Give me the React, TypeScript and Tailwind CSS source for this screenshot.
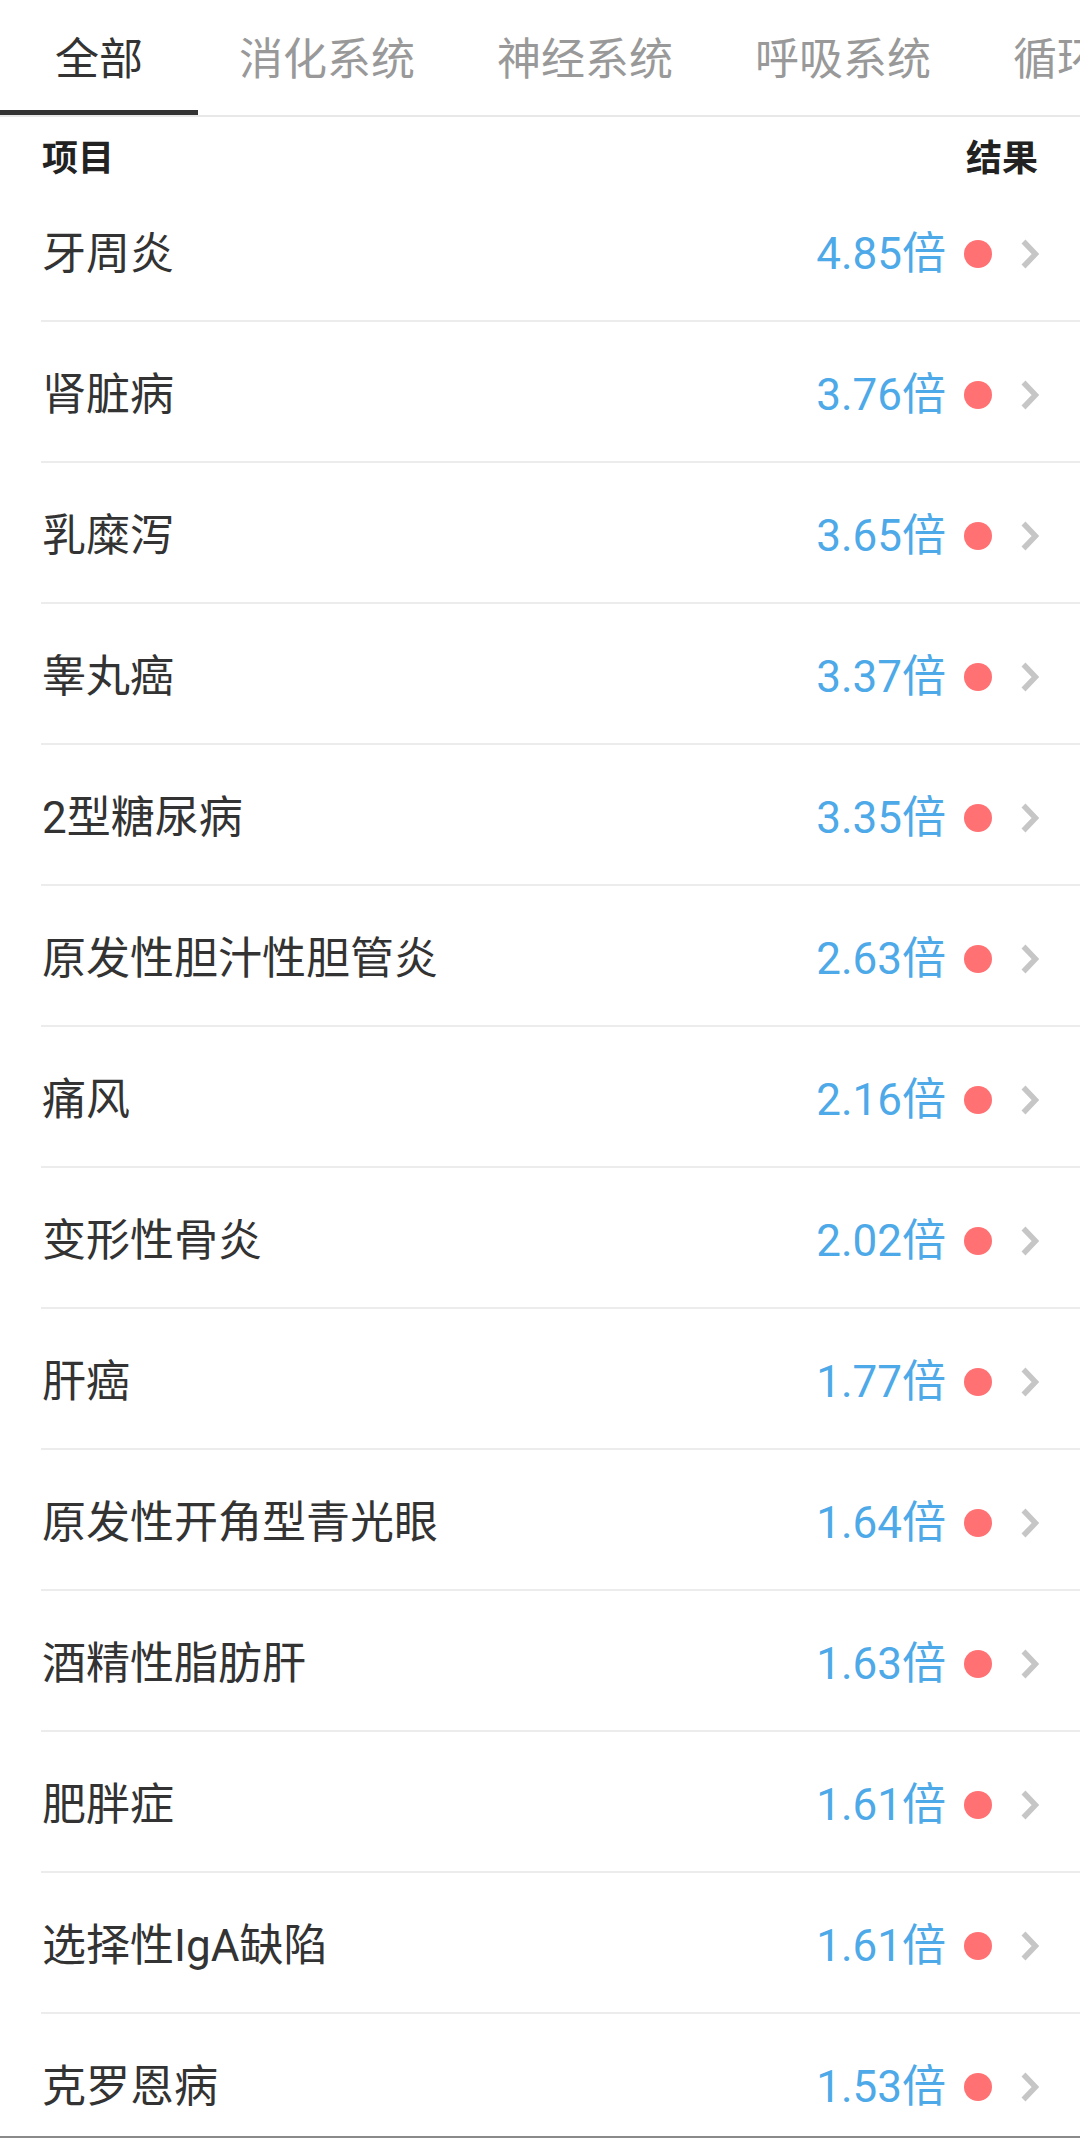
const tabs = ["全部", "消化系统", "神经系统", "呼吸系统", "循环系统"];

const items = [
  { name: "牙周炎", value: "4.85" },
  { name: "肾脏病", value: "3.76" },
  { name: "乳糜泻", value: "3.65" },
  { name: "睾丸癌", value: "3.37" },
  { name: "2型糖尿病", value: "3.35" },
  { name: "原发性胆汁性胆管炎", value: "2.63" },
  { name: "痛风", value: "2.16" },
  { name: "变形性骨炎", value: "2.02" },
  { name: "肝癌", value: "1.77" },
  { name: "原发性开角型青光眼", value: "1.64" },
  { name: "酒精性脂肪肝", value: "1.63" },
  { name: "肥胖症", value: "1.61" },
  { name: "选择性IgA缺陷", value: "1.61" },
  { name: "克罗恩病", value: "1.53" },
];

function Chevron() {
  return (
    <svg width="19" height="32" viewBox="0 0 19 32" fill="none" className="shrink-0">
      <path d="M3.5 3.5 L15.5 16 L3.5 28.5" stroke="#c6c6c6" strokeWidth="5.5" />
    </svg>
  );
}

export default function App() {
  return (
    <div className="h-[2138px] overflow-hidden bg-white border-b-2 border-[#8a8a8a] font-['Roboto','Noto_Sans_CJK_SC',sans-serif]">
      {/* tabs */}
      <div className="flex h-[117px] border-b-2 border-[#e8e8e8] overflow-hidden whitespace-nowrap">
        {tabs.map((tab, i) => (
          <div
            key={tab}
            className={
              i === 0
                ? "relative w-[198px] shrink-0 flex items-center justify-center pt-[5px] text-[44px] leading-[44px] text-[#333]"
                : "relative shrink-0 flex items-center px-[41px] pt-[5px] text-[44px] leading-[44px] text-[#999]"
            }
          >
            {tab}
            {i === 0 && (
              <span className="absolute left-0 right-0 -bottom-[2px] h-[7px] bg-[#333]" />
            )}
          </div>
        ))}
      </div>

      {/* header */}
      <div className="h-[64px] flex justify-between px-[42px] pt-[24px] text-[36px] leading-[36px] font-bold text-[#222]">
        <span>项目</span>
        <span>结果</span>
      </div>

      {/* list */}
      <div className="ml-[41px]">
        {items.map((item) => (
          <div
            key={item.name}
            className="h-[141px] flex items-center justify-between pr-[41px] pt-[6px] border-b-2 border-[#ececec]"
          >
            <span className="pl-[1px] text-[44px] leading-[44px] text-[#333]">{item.name}</span>
            <div className="flex items-center">
              <span className="text-[44px] leading-[44px] text-[#4da9e8]">{item.value}倍</span>
              <span className="ml-[18px] w-[28px] h-[28px] rounded-full bg-[#ff7172]" />
              <span className="ml-[28px] flex items-center">
                <Chevron />
              </span>
            </div>
          </div>
        ))}
      </div>
    </div>
  );
}
